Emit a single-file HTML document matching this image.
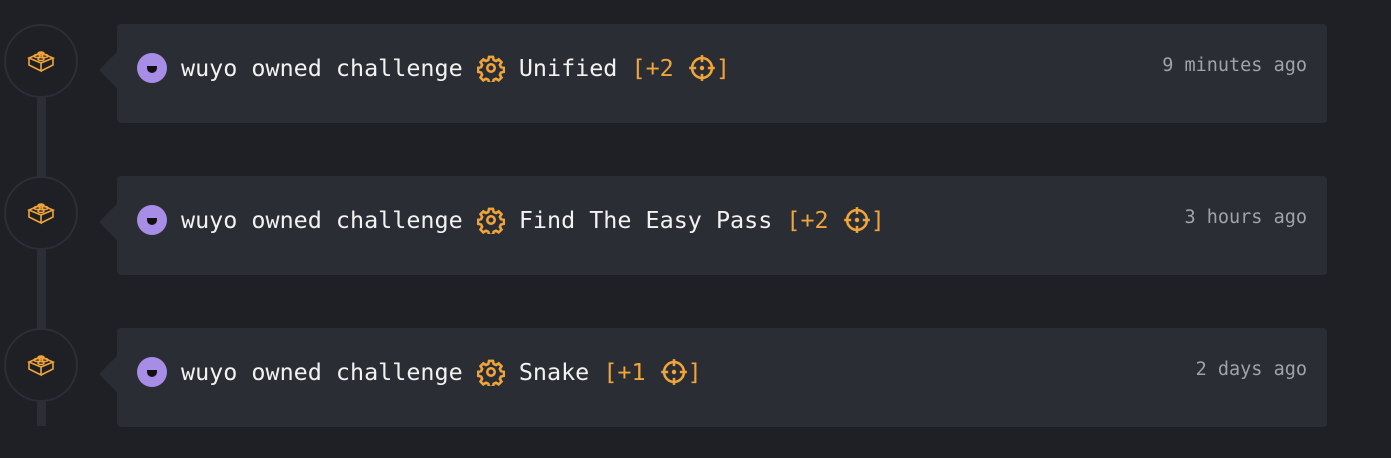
<!DOCTYPE html>
<html><head><style>
body{margin:0;width:1391px;height:458px;background:#1e2026;overflow:hidden;position:relative;font-family:"DejaVu Sans Mono","Liberation Mono",monospace}
.line{position:absolute;left:37px;top:60px;width:9px;height:366px;background:#2b2e34}
.circ{position:absolute;left:4px;width:74px;height:74px;border-radius:50%;background:#1e2026;border:2px solid #2b2e34;box-sizing:border-box;display:flex;align-items:center;justify-content:center}
.card{position:absolute;left:117px;width:1210px;height:99px;background:#2a2d33;border-radius:4px}
.card:before{content:"";position:absolute;left:-18px;top:28px;border:18px solid transparent;border-right-color:#2a2d33;border-left:0;height:0}
.row{position:absolute;left:20px;top:27px;display:flex;align-items:center;height:34px;color:#f2f2f2;font-size:23.4px;white-space:pre}
.av{width:30px;height:30px;border-radius:50%;background:#a78de6;margin-right:14px;position:relative}
.av:after{content:"";position:absolute;left:10px;top:13px;width:10px;height:7px;background:#111;border-radius:0 0 6px 6px}
.o{color:#f0a53a}
.time{position:absolute;right:20px;top:31px;color:#a0a3a8;font-size:18.5px}
svg{display:block}
</style></head><body>
<div class="line"></div>

<div class="circ" style="top:24px"><svg width="28" height="24" viewBox="0 0 28 24" fill="none" stroke="#f0a53a" stroke-width="1.6"><path d="M2 9 L14 4 L26 9 L14 14 Z M2 9 V16 L14 22 V14 M26 9 V16 L14 22"/><ellipse cx="10" cy="7" rx="3" ry="1.5"/><ellipse cx="18" cy="7" rx="3" ry="1.5"/><ellipse cx="14" cy="10" rx="3" ry="1.5"/><ellipse cx="14" cy="4.5" rx="3" ry="1.5"/></svg></div>
<div class="circ" style="top:176px"><svg width="28" height="24" viewBox="0 0 28 24" fill="none" stroke="#f0a53a" stroke-width="1.6"><path d="M2 9 L14 4 L26 9 L14 14 Z M2 9 V16 L14 22 V14 M26 9 V16 L14 22"/><ellipse cx="10" cy="7" rx="3" ry="1.5"/><ellipse cx="18" cy="7" rx="3" ry="1.5"/><ellipse cx="14" cy="10" rx="3" ry="1.5"/><ellipse cx="14" cy="4.5" rx="3" ry="1.5"/></svg></div>
<div class="circ" style="top:328px"><svg width="28" height="24" viewBox="0 0 28 24" fill="none" stroke="#f0a53a" stroke-width="1.6"><path d="M2 9 L14 4 L26 9 L14 14 Z M2 9 V16 L14 22 V14 M26 9 V16 L14 22"/><ellipse cx="10" cy="7" rx="3" ry="1.5"/><ellipse cx="18" cy="7" rx="3" ry="1.5"/><ellipse cx="14" cy="10" rx="3" ry="1.5"/><ellipse cx="14" cy="4.5" rx="3" ry="1.5"/></svg></div>

<div class="card" style="top:24px"><div class="row"><div class="av"></div>wuyo owned challenge <svg width="28" height="28" viewBox="0 0 24 24" fill="none" stroke="#f0a53a" stroke-width="2.2"><circle cx="12" cy="12" r="3.2"/><path d="M10.3 2.5h3.4l.6 2.6 2 .9 2.3-1.4 2.4 2.4-1.4 2.3.9 2 2.6.6v3.4l-2.6.6-.9 2 1.4 2.3-2.4 2.4-2.3-1.4-2 .9-.6 2.6h-3.4l-.6-2.6-2-.9-2.3 1.4-2.4-2.4 1.4-2.3-.9-2-2.6-.6v-3.4l2.6-.6.9-2-1.4-2.3 2.4-2.4 2.3 1.4 2-.9z"/></svg> Unified <span class="o">[+2 </span><svg width="28" height="28" viewBox="0 0 24 24" fill="none" stroke="#f0a53a" stroke-width="2.2"><circle cx="12" cy="12" r="8.5"/><path d="M12 1v6M12 17v6M1 12h6M17 12h6"/><circle cx="12" cy="12" r="0.8" fill="#f0a53a"/></svg><span class="o">]</span></div><div class="time">9 minutes ago</div></div>

<div class="card" style="top:176px"><div class="row"><div class="av"></div>wuyo owned challenge <svg width="28" height="28" viewBox="0 0 24 24" fill="none" stroke="#f0a53a" stroke-width="2.2"><circle cx="12" cy="12" r="3.2"/><path d="M10.3 2.5h3.4l.6 2.6 2 .9 2.3-1.4 2.4 2.4-1.4 2.3.9 2 2.6.6v3.4l-2.6.6-.9 2 1.4 2.3-2.4 2.4-2.3-1.4-2 .9-.6 2.6h-3.4l-.6-2.6-2-.9-2.3 1.4-2.4-2.4 1.4-2.3-.9-2-2.6-.6v-3.4l2.6-.6.9-2-1.4-2.3 2.4-2.4 2.3 1.4 2-.9z"/></svg> Find The Easy Pass <span class="o">[+2 </span><svg width="28" height="28" viewBox="0 0 24 24" fill="none" stroke="#f0a53a" stroke-width="2.2"><circle cx="12" cy="12" r="8.5"/><path d="M12 1v6M12 17v6M1 12h6M17 12h6"/><circle cx="12" cy="12" r="0.8" fill="#f0a53a"/></svg><span class="o">]</span></div><div class="time">3 hours ago</div></div>

<div class="card" style="top:328px"><div class="row"><div class="av"></div>wuyo owned challenge <svg width="28" height="28" viewBox="0 0 24 24" fill="none" stroke="#f0a53a" stroke-width="2.2"><circle cx="12" cy="12" r="3.2"/><path d="M10.3 2.5h3.4l.6 2.6 2 .9 2.3-1.4 2.4 2.4-1.4 2.3.9 2 2.6.6v3.4l-2.6.6-.9 2 1.4 2.3-2.4 2.4-2.3-1.4-2 .9-.6 2.6h-3.4l-.6-2.6-2-.9-2.3 1.4-2.4-2.4 1.4-2.3-.9-2-2.6-.6v-3.4l2.6-.6.9-2-1.4-2.3 2.4-2.4 2.3 1.4 2-.9z"/></svg> Snake <span class="o">[+1 </span><svg width="28" height="28" viewBox="0 0 24 24" fill="none" stroke="#f0a53a" stroke-width="2.2"><circle cx="12" cy="12" r="8.5"/><path d="M12 1v6M12 17v6M1 12h6M17 12h6"/><circle cx="12" cy="12" r="0.8" fill="#f0a53a"/></svg><span class="o">]</span></div><div class="time">2 days ago</div></div>
</body></html>
